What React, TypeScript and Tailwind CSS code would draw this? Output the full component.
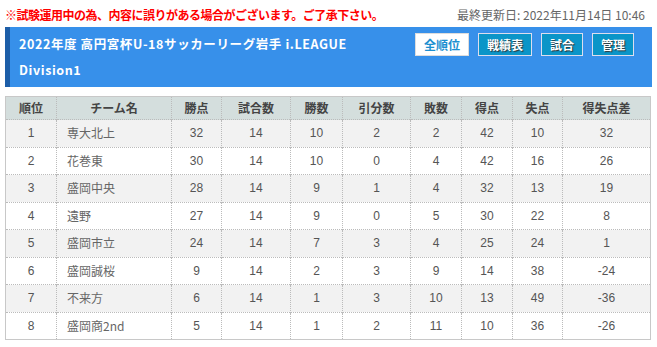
import React from 'react';

const cols = [51, 115, 50, 69, 52, 68, 51, 51, 50, 88];
const heads = ['順位', 'チーム名', '勝点', '試合数', '勝数', '引分数', '敗数', '得点', '失点', '得失点差'];

const rows: (string | number)[][] = [
  [1, '専大北上', 32, 14, 10, 2, 2, 42, 10, 32],
  [2, '花巻東', 30, 14, 10, 0, 4, 42, 16, 26],
  [3, '盛岡中央', 28, 14, 9, 1, 4, 32, 13, 19],
  [4, '遠野', 27, 14, 9, 0, 5, 30, 22, 8],
  [5, '盛岡市立', 24, 14, 7, 3, 4, 25, 24, 1],
  [6, '盛岡誠桜', 9, 14, 2, 3, 9, 14, 38, -24],
  [7, '不来方', 6, 14, 1, 3, 10, 13, 49, -36],
  [8, '盛岡商2nd', 5, 14, 1, 2, 11, 10, 36, -26],
];

const navButtons = ['戦績表', '試合', '管理'];

export default function App() {
  return (
    <div className="w-[657px] h-[347px] bg-white px-[5px] pt-[6px] font-['Liberation_Sans','Noto_Sans_CJK_JP',sans-serif] overflow-hidden">
      {/* 注意書き + 更新日 */}
      <div className="flex items-center justify-between h-[18px] pr-[7px]">
        <span className="text-[12px] font-bold text-[#f00] font-['Noto_Sans_CJK_JP',sans-serif] tracking-[-0.5px]">
          ※試験運用中の為、内容に誤りがある場合がございます。ご了承下さい。
        </span>
        <span className="text-[12px] text-[#666] font-['Noto_Sans_CJK_JP',sans-serif]">最終更新日: 2022年11月14日 10:46</span>
      </div>

      {/* ヘッダー */}
      <div className="mt-[3px] h-[60px] bg-[#3790ea] border-l-[5px] border-[#1d5ea8] flex justify-between pl-[9px] pr-[18px]">
        <div className="flex flex-col text-white font-bold text-[12.5px] font-['Noto_Sans_CJK_JP',sans-serif] tracking-[0.6px]">
          <span className="leading-[26px] mt-[4px]">2022年度 高円宮杯U-18サッカーリーグ岩手 i.LEAGUE</span>
          <span className="leading-[26px]">Division1</span>
        </div>
        <div className="flex items-start gap-[9px] pt-[6px]">
          <button className="h-[23px] px-[8px] bg-white border border-[#ddd] text-[#1c8fd0] text-[12px] font-bold font-['Noto_Sans_CJK_JP',sans-serif]">
            全順位
          </button>
          {navButtons.map(b => (
            <button
              key={b}
              className="h-[23px] px-[8px] bg-[#0b95c8] border border-[#dde] text-white text-[12px] font-bold font-['Noto_Sans_CJK_JP',sans-serif] [text-shadow:1px_1px_1px_#333]"
            >
              {b}
            </button>
          ))}
        </div>
      </div>

      {/* 順位表 */}
      <table className="mt-[9px] w-[645px] table-fixed border-collapse border border-[#c8c8c8] text-[12px] text-[#555]">
        <colgroup>
          {cols.map((w, i) => (
            <col key={i} style={{ width: w }} />
          ))}
        </colgroup>
        <thead>
          <tr className="h-[23px] bg-[#d4dedd]">
            {heads.map(h => (
              <th
                key={h}
                className="border-l border-dotted border-[#bbb] first:border-l-0 font-bold text-[#444] text-center font-['Noto_Sans_CJK_JP',sans-serif]"
              >
                {h}
              </th>
            ))}
          </tr>
        </thead>
        <tbody>
          {rows.map((r, ri) => (
            <tr key={ri} className={`h-[27.5px] ${ri % 2 === 0 ? 'bg-[#f2f2f2]' : 'bg-white'}`}>
              {r.map((c, ci) => (
                <td
                  key={ci}
                  className={`border-t border-l border-dotted border-[#bbb] first:border-l-0 ${
                    ci === 1 ? 'text-left pl-[10px] text-[#666] font-["Noto_Sans_CJK_JP",sans-serif]' : 'text-center'
                  }`}
                >
                  {c}
                </td>
              ))}
            </tr>
          ))}
        </tbody>
      </table>
    </div>
  );
}
